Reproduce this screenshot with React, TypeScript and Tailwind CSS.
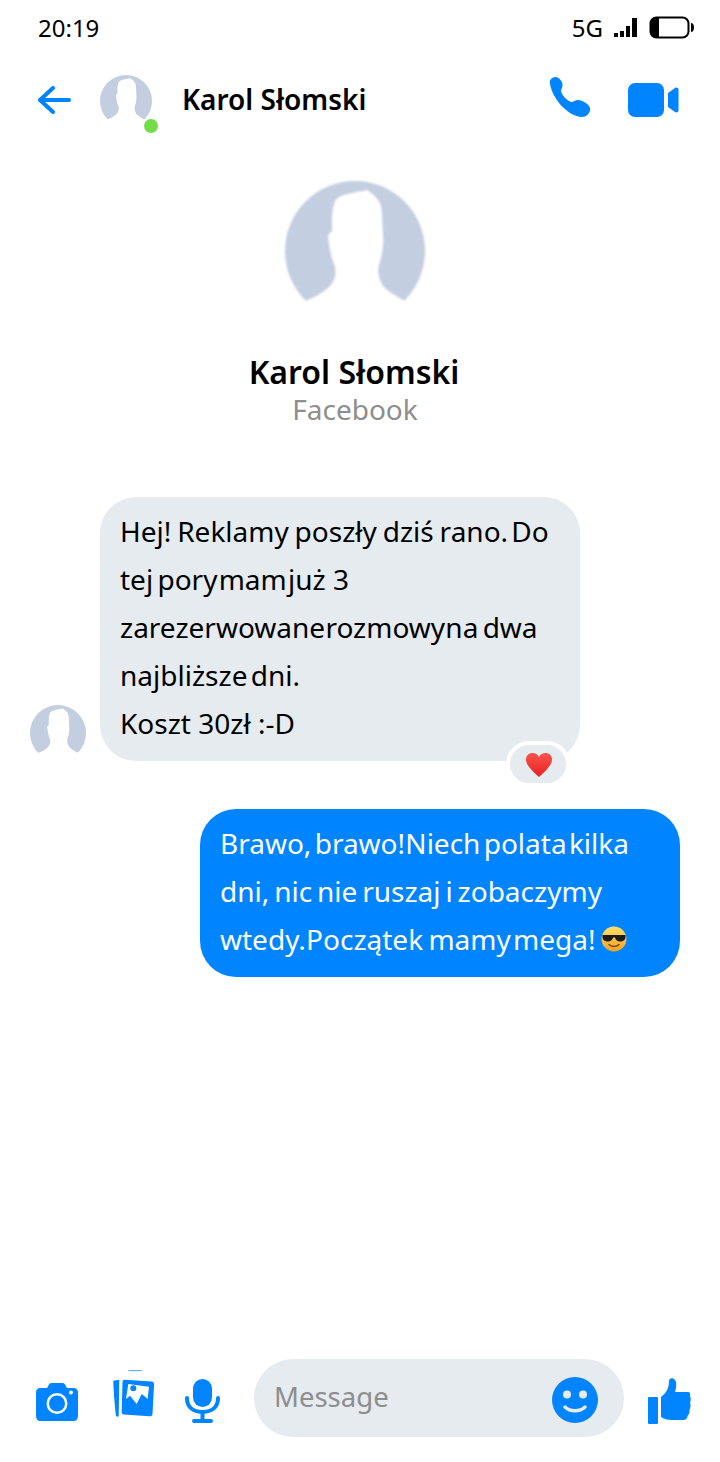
import React from 'react';

const blue = '#0084ff';

const Avatar: React.FC<{ size: number; className?: string }> = ({ size, className = 'blur-[0.5px]' }) => (
  <svg width={size} height={size} viewBox="0 0 140 140" className={`block shrink-0 ${className}`}>
    <circle cx="70" cy="70" r="70" fill="#c4cee1" />
    <path
      d="M82 9 C70 12 56 12 50 20 C46 30 47 42 47 50 L43 54 C44 66 46 76 50 86 C52 96 48 102 44 106 C36 113 28 117 20 120 L-2 125 L-2 142 L142 142 L142 122 L118 119 C110 114 102 110 98 105 C94 98 92 92 94 84 C97 74 99 64 98 54 C97 42 98 30 95 22 C92 17 88 13 86 12 Z"
      fill="#fff"
    />
  </svg>
);

const Heart = () => (
  <svg width="28" height="28" viewBox="0 0 28 28" className="mt-[2px] ml-[1px] blur-[0.4px]">
    <defs>
      <linearGradient id="heartFill" x1="0" y1="0" x2="0" y2="1">
        <stop offset="0" stopColor="#f8554d" />
        <stop offset="1" stopColor="#e8201f" />
      </linearGradient>
    </defs>
    <path
      d="M14 26 C9 21 1 15 1 8.500 C1 4.500 4 2 7.500 2 C10.500 2 12.800 3.500 14 6 C15.200 3.500 17.500 2 20.500 2 C24 2 27 4.500 27 8.500 C27 15 19 21 14 26 Z"
      fill="url(#heartFill)"
    />
  </svg>
);

const CoolEmoji = () => (
  <svg width="26" height="26" viewBox="0 0 26 26" className="ml-[6px] shrink-0">
    <defs>
      <linearGradient id="coolFace" x1="0" y1="0" x2="0" y2="1">
        <stop offset="0" stopColor="#fde26a" />
        <stop offset="1" stopColor="#f3a021" />
      </linearGradient>
    </defs>
    <circle cx="13" cy="13" r="12.500" fill="url(#coolFace)" />
    <path d="M1.500 9 H24.500 V11 C24.500 14 22 15.500 19 15.500 C16.500 15.500 14.500 14 14 11.500 H12 C11.500 14 9.500 15.500 7 15.500 C4 15.500 1.500 14 1.500 11 Z" fill="#1c1c1c" />
    <path d="M8 18.500 C10 21 16 21 18 18.500" stroke="#7a4a10" strokeWidth="1.500" fill="none" strokeLinecap="round" />
  </svg>
);

const App: React.FC = () => {
  return (
    <div className="w-[720px] h-[1462px] bg-white flex flex-col font-['Noto_Sans',sans-serif] text-black overflow-hidden">
      {/* status bar */}
      <div className="h-[56px] shrink-0 flex items-center pl-[38px] pr-[25px] text-[24px]">
        <span>20:19</span>
        <span className="ml-auto">5G</span>
        <svg width="26" height="22" viewBox="0 0 26 22" className="ml-[10px]">
          <rect x="1" y="16" width="4" height="4" fill="#000" />
          <rect x="7" y="14" width="4" height="6" fill="#000" />
          <rect x="13" y="9" width="4" height="11" fill="#000" />
          <rect x="19" y="1" width="5" height="19" fill="#000" />
        </svg>
        <svg width="46" height="24" viewBox="0 0 46 24" className="ml-[10px]">
          <rect x="1.500" y="1.500" width="38" height="20" rx="6" fill="none" stroke="#000" strokeWidth="2" />
          <path d="M7 1.500 H10 V21.500 H7 C4 21.500 1.500 19.500 1.500 16.500 V6.500 C1.500 3.500 4 1.500 7 1.500 Z" fill="#000" />
          <path d="M42 7 C44 7 45 9 45 11.500 C45 14 44 16 42 16 Z" fill="#000" />
        </svg>
      </div>

      {/* header */}
      <div className="h-[87px] shrink-0 flex items-center pl-[36px] pr-[41px]">
        <svg width="36" height="30" viewBox="0 0 36 30" className="blur-[0.5px]">
          <path d="M17 3 L4 15 L17 27 M4 15 H33" fill="none" stroke={blue} strokeWidth="4" strokeLinecap="round" strokeLinejoin="round" />
        </svg>
        <div className="relative ml-[28px] mt-[3px]">
          <Avatar size={52} />
          <div className="absolute left-[44px] top-[44px] w-[14px] h-[14px] rounded-full bg-[#72dd48]" />
        </div>
        <span className="ml-[30px] text-[28px] font-semibold leading-none mb-[2px]">Karol Słomski</span>
        <svg width="42" height="42" viewBox="0 0 42 42" className="ml-auto mb-[4px] blur-[0.5px]">
          <path
            d="M1 7 C0 3 3 0 6.500 0 C10 0 13 4 13.500 7 C14 10 12 12 12 14 C13 18 17 23 22 25 C24 25.500 26 23 29 23 C33 23 40 27 41 31 C42 35 38 40 33 40 C19 39 4 23 1 7 Z"
            fill={blue}
          />
        </svg>
        <svg width="51" height="34" viewBox="0 0 51 34" className="ml-[37px] blur-[0.5px]">
          <rect x="0" y="0" width="36" height="34" rx="7" fill={blue} />
          <path d="M40 10 L47 5 C49 4 50.500 5 50.500 7 V27 C50.500 29 49 30 47 29 L40 24 Z" fill={blue} />
        </svg>
      </div>

      {/* profile */}
      <div className="flex flex-col items-center shrink-0 mt-[38px] pr-[10px]">
        <Avatar size={140} className="blur-[1px]" />
        <div className="mt-[28px] text-[32px] font-semibold leading-[46px] -ml-[2px]">Karol Słomski</div>
        <div className="text-[28px] leading-[32px] text-[#8e8e8e] mt-[-2px]">Facebook</div>
      </div>

      {/* messages */}
      <div className="mt-[72px] flex flex-col shrink-0">
        <div className="flex items-end pl-[30px]">
          <Avatar size={56} />
          <div className="relative ml-[14px] w-[480px] h-[264px] rounded-[36px] bg-[#e6ebf0] pl-[20px] pt-[10px] text-[28px] leading-[48px]">
            <div className="whitespace-nowrap [word-spacing:-1.400px]">Hej! Reklamy poszły dziś rano.<span className="[word-spacing:-4px]"> Do</span></div>
            <div className="whitespace-nowrap">
              <span className="[word-spacing:-3px]">tej </span>
              <span className="[word-spacing:-6px]">pory mam już</span> 3
            </div>
            <div className="whitespace-nowrap">
              <span className="[word-spacing:-7px]">zarezerwowane rozmowy na</span>
              <span className="[word-spacing:-3px]"> dwa</span>
            </div>
            <div className="whitespace-nowrap [word-spacing:-4px]">najbliższe dni.</div>
            <div className="whitespace-nowrap">Koszt 30zł :-D</div>
            <div className="absolute left-[406px] top-[244px] w-[64px] h-[46px] rounded-[23px] border-[4px] border-white bg-[#e6ebf0] flex items-center justify-center">
              <Heart />
            </div>
          </div>
        </div>

        <div className="mt-[48px] ml-[200px] w-[480px] h-[168px] rounded-[36px] bg-[#0084ff] pl-[20px] pt-[10px] text-[28px] leading-[48px] text-white">
          <div className="whitespace-nowrap">
            <span className="[word-spacing:-4px]">Brawo, </span>
            <span className="[word-spacing:-7px]">brawo! </span>
            <span className="[word-spacing:-4px]">Niech </span>
            <span className="[word-spacing:-5px]">polata kilka</span>
          </div>
          <div className="whitespace-nowrap [word-spacing:-2.400px]">dni, nic nie ruszaj i zobaczymy</div>
          <div className="whitespace-nowrap flex items-center">
            <span>
              <span className="[word-spacing:-7px]">wtedy. </span>
              <span className="[word-spacing:-2px]">Początek </span>
              <span className="[word-spacing:-5px]">mamy mega!</span>
            </span>
            <CoolEmoji />
          </div>
        </div>
      </div>

      {/* composer */}
      <div className="mt-auto mb-[25px] flex items-center h-[78px] shrink-0 pl-[36px]">
        <svg width="42" height="38" viewBox="0 0 42 38" className="mt-[8px] blur-[0.5px]">
          <path
            fillRule="evenodd"
            d="M4 5 H11 L13 1.500 C13.500 0.500 14.500 0 16 0 H26 C27.500 0 28.500 0.500 29 1.500 L31 5 H38 C40 5 42 7 42 9 V33 C42 36 40 38 38 38 H4 C2 38 0 36 0 33 V9 C0 7 2 5 4 5 Z M21 10 A10.500 10.500 0 1 0 21 31 A10.500 10.500 0 1 0 21 10 Z M21 12.500 A8 8 0 1 1 21 28.500 A8 8 0 1 1 21 12.500 Z M35 7.500 A2 2 0 1 0 35 11.500 A2 2 0 1 0 35 7.500 Z"
            fill={blue}
          />
        </svg>
        <svg width="43" height="49" viewBox="0 -9 43 49" className="ml-[34px] mb-[8px] blur-[0.4px]">
          <path d="M16 -9 C20 -8 25 -8 30 -9 Z" fill="none" stroke={blue} strokeWidth="1" opacity="0.6" />
          <path d="M1.300 1.700 L7.300 0.700 L6.700 37.700 L4 37.300 C3 30 1.500 12 1.300 1.700 Z" fill={blue} />
          <path
            fillRule="evenodd"
            d="M13 0.700 L39.500 2.500 C41.500 2.700 42.300 4 42 6 L40.500 35 C40.300 37 39 37.500 37 37.300 L12 35.500 C10 35.300 9.500 34 9.700 32 L10.500 3 C10.700 1.300 11.500 0.600 13 0.700 Z M16.300 5 L14 20 L18 16.700 L24.700 25 L29.700 15 L35.700 20 L37 7.700 Z"
            fill={blue}
          />
          <circle cx="21.300" cy="9.300" r="3" fill={blue} />
        </svg>
        <svg width="38" height="46" viewBox="0 0 38 46" className="ml-[29px] mt-[8px] blur-[0.4px]">
          <rect x="9" y="0" width="19" height="28" rx="9.500" fill={blue} />
          <path d="M3 19 C3 28 9 33 18.500 33 C28 33 34 28 34 19" fill="none" stroke={blue} strokeWidth="4" strokeLinecap="round" />
          <path d="M18.500 33 V41" stroke={blue} strokeWidth="4" />
          <path d="M10 42 H27" stroke={blue} strokeWidth="4" strokeLinecap="round" />
        </svg>
        <div className="ml-[32px] w-[370px] h-[78px] rounded-[39px] bg-[#e6ebf0] flex items-center pl-[20px] pr-[26px] text-[27.5px] text-[#8e8e8e]">
          <span className="mb-[2px]">Message</span>
          <svg width="46" height="46" viewBox="0 0 46 46" className="ml-auto mt-[4px] blur-[0.4px]">
            <circle cx="23" cy="23" r="23" fill={blue} />
            <circle cx="15" cy="17.500" r="4" fill="#e6ebf0" />
            <circle cx="31" cy="17.500" r="4" fill="#e6ebf0" />
            <path d="M13 30 C18 35 28 35 33 30" fill="none" stroke="#e6ebf0" strokeWidth="3.500" strokeLinecap="round" />
          </svg>
        </div>
        <svg width="43" height="46" viewBox="0 0 43 46" className="ml-[24px] mt-[5px] blur-[0.4px]">
          <rect x="0" y="19" width="10" height="27" rx="1" fill={blue} />
          <path
            d="M13 19 C18 15 21 11 21 3 C21 1 23 0 25 0.500 C29 2 29 8 27 14 L40 14 C42 14 42.500 16 42 18 C43 20 43 23 42 25 C43 27 42.500 30 41.500 32 C42 35 40.500 37 39.500 38 C39.500 41 37 42 35 42 L24 42 C19 42 16 41 13 39 Z"
            fill={blue}
          />
        </svg>
      </div>
    </div>
  );
};

export default App;
